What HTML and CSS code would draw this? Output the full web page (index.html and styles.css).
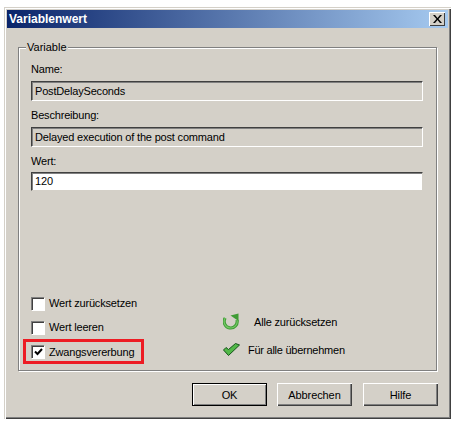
FILE: index.html
```html
<!DOCTYPE html>
<html lang="de">
<head>
  <meta charset="UTF-8">
  <title>Variablenwert</title>
  <link rel="stylesheet" href="styles.css">
</head>
<body>
  <div class="window">
    <div class="titlebar">
      <span class="title">Variablenwert</span>
      <span class="close">
        <svg width="9" height="8" viewBox="0 0 9 8"><path d="M0 0h2l2.500 3L7 0h2L5.500 4 9 8H7L4.500 5 2 8H0l3.500-4z" fill="#000"/></svg>
      </span>
    </div>
    <div class="content">
      <fieldset class="group">
        <legend>Variable</legend>
        <div class="field-label">Name:</div>
        <div class="field readonly">PostDelaySeconds</div>
        <div class="field-label">Beschreibung:</div>
        <div class="field readonly">Delayed execution of the post command</div>
        <div class="field-label">Wert:</div>
        <div class="field editable">120</div>

        <div class="options">
          <div class="checks">
            <div class="check-row"><span class="checkbox"></span>Wert zurücksetzen</div>
            <div class="check-row"><span class="checkbox"></span>Wert leeren</div>
            <div class="check-row marked">
              <span class="checkbox">
                <svg width="9" height="8" viewBox="0 0 9 8"><path d="M1 3.500l2.500 2.500L8 1" fill="none" stroke="#000" stroke-width="2"/></svg>
              </span>Zwangsvererbung
            </div>
          </div>
          <div class="actions">
            <div class="action reset">
              <svg width="18" height="18" viewBox="0 0 18 18"><path d="M2.200 6A6.500 6.500 0 1 0 14 8" fill="none" stroke="#3f9c35" stroke-width="3.200"/><path d="M2.200 6A6.500 6.500 0 1 0 14 8" fill="none" stroke="#74c866" stroke-width="1.200"/><path d="M7.500 3.500L15.500 1.500V9z" fill="#3f9c35"/></svg>
              <span>Alle zurücksetzen</span>
            </div>
            <div class="action apply">
              <svg width="17" height="13" viewBox="0 0 17 13"><path d="M0.500 7L3 4.500 5.500 6.500 12.500 0.500 16.500 2 5.500 12.500z" fill="#52b848" stroke="#14531a" stroke-width="1"/></svg>
              <span>Für alle übernehmen</span>
            </div>
          </div>
        </div>
      </fieldset>
      <div class="buttons">
        <button class="default">OK</button>
        <button>Abbrechen</button>
        <button class="help">Hilfe</button>
      </div>
    </div>
  </div>
</body>
</html>
```

FILE: styles.css
```css
html, body {
  margin: 0;
  padding: 0;
  background-color: white;
}
body {
  font-family: 'Liberation Sans', Arial, sans-serif;
  font-size: 11px;
  letter-spacing: -0.18px;
  color: black;
}
.window {
  box-sizing: border-box;
  width: 447px;
  height: 412px;
  margin: 7px 0 0 4px;
  padding: 3px 3px 2px 3px;
  background-color: #d4d0c8;
  box-shadow: inset 1px 1px 0 #d4d0c8, inset 2px 2px 0 white, inset -1px -1px 0 #404040, inset -2px -2px 0 #808080;
}
.titlebar {
  display: flex;
  align-items: center;
  justify-content: space-between;
  height: 18px;
  padding: 0 3px 0 2px;
  background: linear-gradient(to right, #0a246a, #a6caf0);
}
.title {
  color: white;
  font-weight: bold;
  font-size: 12px;
  letter-spacing: 0;
}
.close {
  display: flex;
  align-items: center;
  justify-content: center;
  box-sizing: border-box;
  width: 16px;
  height: 14px;
  background-color: #d4d0c8;
  box-shadow: inset 1px 1px 0 white, inset -1px -1px 0 #404040;
}
.content {
  padding: 12px 10px 0 11px;
}
.group {
  display: flex;
  flex-direction: column;
  box-sizing: border-box;
  width: 419px;
  height: 331px;
  margin: 0;
  padding: 8px 13px 0 12px;
  border: 1px solid #808080;
  box-shadow: 1px 1px 0 white, inset 1px 1px 0 white;
}
.group legend {
  padding: 0 1px;
  margin-left: -5px;
  height: 14px;
  line-height: 14px;
  letter-spacing: 0;
  background-color: #d4d0c8;
}
.field-label {
  height: 14px;
  line-height: 14px;
  margin-bottom: 5px;
}
.field {
  box-sizing: border-box;
  height: 20px;
  line-height: 18px;
  padding: 0 3px;
  margin-bottom: 7px;
  border-top: 1px solid #404040;
  border-left: 1px solid #404040;
  border-right: 1px solid white;
  border-bottom: 1px solid white;
  box-shadow: inset 1px 1px 0 #808080;
}
.field.editable {
  height: 19px;
  margin-top: -1px;
  line-height: 17px;
  background-color: white;
  border-right-color: #d4d0c8;
  border-bottom-color: #d4d0c8;
}
.options {
  display: flex;
  flex: 1;
  align-items: flex-end;
  padding-bottom: 12px;
}
.checks {
  display: flex;
  flex-direction: column;
  gap: 10px;
  width: 192px;
}
.check-row {
  display: flex;
  align-items: center;
  gap: 5px;
  height: 14px;
}
.check-row.marked {
  box-sizing: border-box;
  width: 121px;
  height: 25px;
  margin: -5px 0 -6px -8px;
  padding-left: 5px;
  border: 3px solid #ed1c24;
}
.checkbox {
  display: flex;
  align-items: center;
  justify-content: center;
  box-sizing: border-box;
  width: 13px;
  height: 13px;
  flex-shrink: 0;
  background-color: white;
  border-top: 1px solid #808080;
  border-left: 1px solid #808080;
  box-shadow: inset 1px 1px 0 #404040, 1px 1px 0 white;
}
.actions {
  display: flex;
  flex-direction: column;
  gap: 11px;
  padding-bottom: 2px;
}
.action {
  display: flex;
  align-items: center;
}
.reset span {
  margin-left: 13px;
  padding-top: 2px;
}
.apply {
  align-items: flex-start;
}
.apply svg {
  margin-top: 2px;
}
.apply span {
  margin-left: 8px;
  padding-top: 3px;
  letter-spacing: -0.25px;
}
.buttons {
  display: flex;
  justify-content: flex-end;
  gap: 10px;
  padding: 12px 0 0 0;
}
button {
  box-sizing: border-box;
  width: 75px;
  height: 23px;
  padding: 0;
  font-family: inherit;
  font-size: 11px;
  letter-spacing: -0.1px;
  color: black;
  background-color: #d4d0c8;
  border: none;
  box-shadow: inset 1px 1px 0 white, inset -1px -1px 0 #404040, inset -2px -2px 0 #808080;
}
button.default {
  border: 1px solid black;
  box-shadow: inset 1px 1px 0 white, inset -1px -1px 0 #808080;
}
button.help {
  margin-left: 1px;
}
```
